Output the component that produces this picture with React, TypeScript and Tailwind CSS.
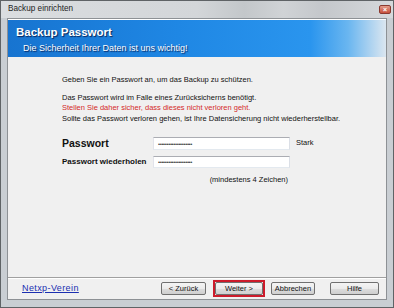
export default function App() {
  const dots = "••••••••••••••••••••";
  return (
    <div className="flex h-[308px] w-[394px] flex-col border border-[#5f6366] bg-[#c9ced3] font-['Liberation_Sans',Arial,sans-serif] text-black">
      {/* title bar */}
      <div className="flex h-[17px] shrink-0 items-center justify-between bg-[linear-gradient(90deg,#dadde0_0%,#d3d6d9_50%,#c3c7ca_62%,#d0d3d6_72%,#c4c7cb_82%,#d6d9dc_100%)] pl-[7px] pr-[2px]">
        <span className="text-[8.2px] leading-none text-[#1e1e1e]">Backup einrichten</span>
        <span className="mt-[-1px] flex h-[9px] w-[12px] items-center justify-center rounded-[2px] border border-[#8a3a30] bg-[linear-gradient(180deg,#e39a88,#c7503d)] text-[7px] font-bold leading-none text-white">
          ×
        </span>
      </div>

      <div className="flex min-h-0 flex-1 flex-col px-[6px] pb-[7px]">
        <div className="flex flex-1 flex-col border border-[#8d9195] bg-[#f0f0f0]">
          {/* blue header */}
          <div className="h-[38px] shrink-0 border-t border-white bg-[linear-gradient(90deg,#1774d0_0%,#1f87e4_45%,#2a95ee_80%,#6ab6f0_90%,#dbe6f0_100%)] pl-[8px] pt-[6px] text-white [text-shadow:1px_1px_1px_rgba(0,0,40,0.7)]">
            <div className="text-[11.5px] font-bold leading-[13px]">Backup Passwort</div>
            <div className="ml-[7px] mt-[4px] text-[9px] leading-[10px]">Die Sicherheit Ihrer Daten ist uns wichtig!</div>
          </div>

          {/* body */}
          <div className="pl-[54px] pt-[18px] text-[7.5px] leading-[10.5px] text-[#111]">
            <p>Geben Sie ein Passwort an, um das Backup zu schützen.</p>
            <p className="mt-[7px]">Das Passwort wird im Falle eines Zurücksicherns benötigt.</p>
            <p className="text-[#d42a2a]">Stellen Sie daher sicher, dass dieses nicht verloren geht.</p>
            <p>Sollte das Passwort verloren gehen, ist Ihre Datensicherung nicht wiederherstellbar.</p>

            <div className="mt-[13px] flex items-center">
              <span className="w-[91px] text-[10.5px] font-bold leading-[13px]">Passwort</span>
              <div className="flex h-[13px] w-[137px] items-center border border-[#abadb3] border-l-[#e2e3ea] border-r-[#dbdfe6] border-b-[#e3e9ef] bg-white pl-[4px] text-[6px] leading-none tracking-[-0.4px] text-[#444]">
                {dots}
              </div>
              <span className="ml-[6px]">Stark</span>
            </div>
            <div className="mt-[6px] flex items-center">
              <span className="w-[91px] text-[8px] font-bold leading-[12px]">Passwort wiederholen</span>
              <div className="flex h-[12px] w-[137px] items-center border border-[#abadb3] border-l-[#e2e3ea] border-r-[#dbdfe6] border-b-[#e3e9ef] bg-white pl-[4px] text-[6px] leading-none tracking-[-0.4px] text-[#444]">
                {dots}
              </div>
            </div>
            <div className="mt-[7px] w-[226px] text-right">(mindestens 4 Zeichen)</div>
          </div>

          {/* footer */}
          <div className="mt-auto border-t border-[#a0a0a0] shadow-[inset_0_1px_0_#ffffff]">
            <div className="flex h-[21px] items-center pr-[7px]">
              <span className="ml-[14px] text-[9px] leading-none tracking-[0.4px] text-[#1b2fb0] underline">Netxp-Verein</span>
              <div className="ml-auto flex items-center">
                <Btn w="w-[45px]">&lt; Zurück</Btn>
                <span className="ml-[7px] inline-flex border-2 border-[#cc1b2b]">
                  <Btn w="w-[48px]">Weiter &gt;</Btn>
                </span>
                <span className="ml-[6px]">
                  <Btn w="w-[44px]">Abbrechen</Btn>
                </span>
                <span className="ml-[15px]">
                  <Btn w="w-[49px]">Hilfe</Btn>
                </span>
              </div>
            </div>
          </div>
        </div>
      </div>
    </div>
  );
}

function Btn({ w, children }: { w: string; children: React.ReactNode }) {
  return (
    <span
      className={`flex h-[13px] ${w} items-center justify-center rounded-[2px] border border-[#707070] bg-[linear-gradient(180deg,#f4f4f4_0%,#ebebeb_50%,#dddddd_51%,#cfcfcf_100%)] text-[7.5px] leading-none text-[#111]`}
    >
      {children}
    </span>
  );
}
